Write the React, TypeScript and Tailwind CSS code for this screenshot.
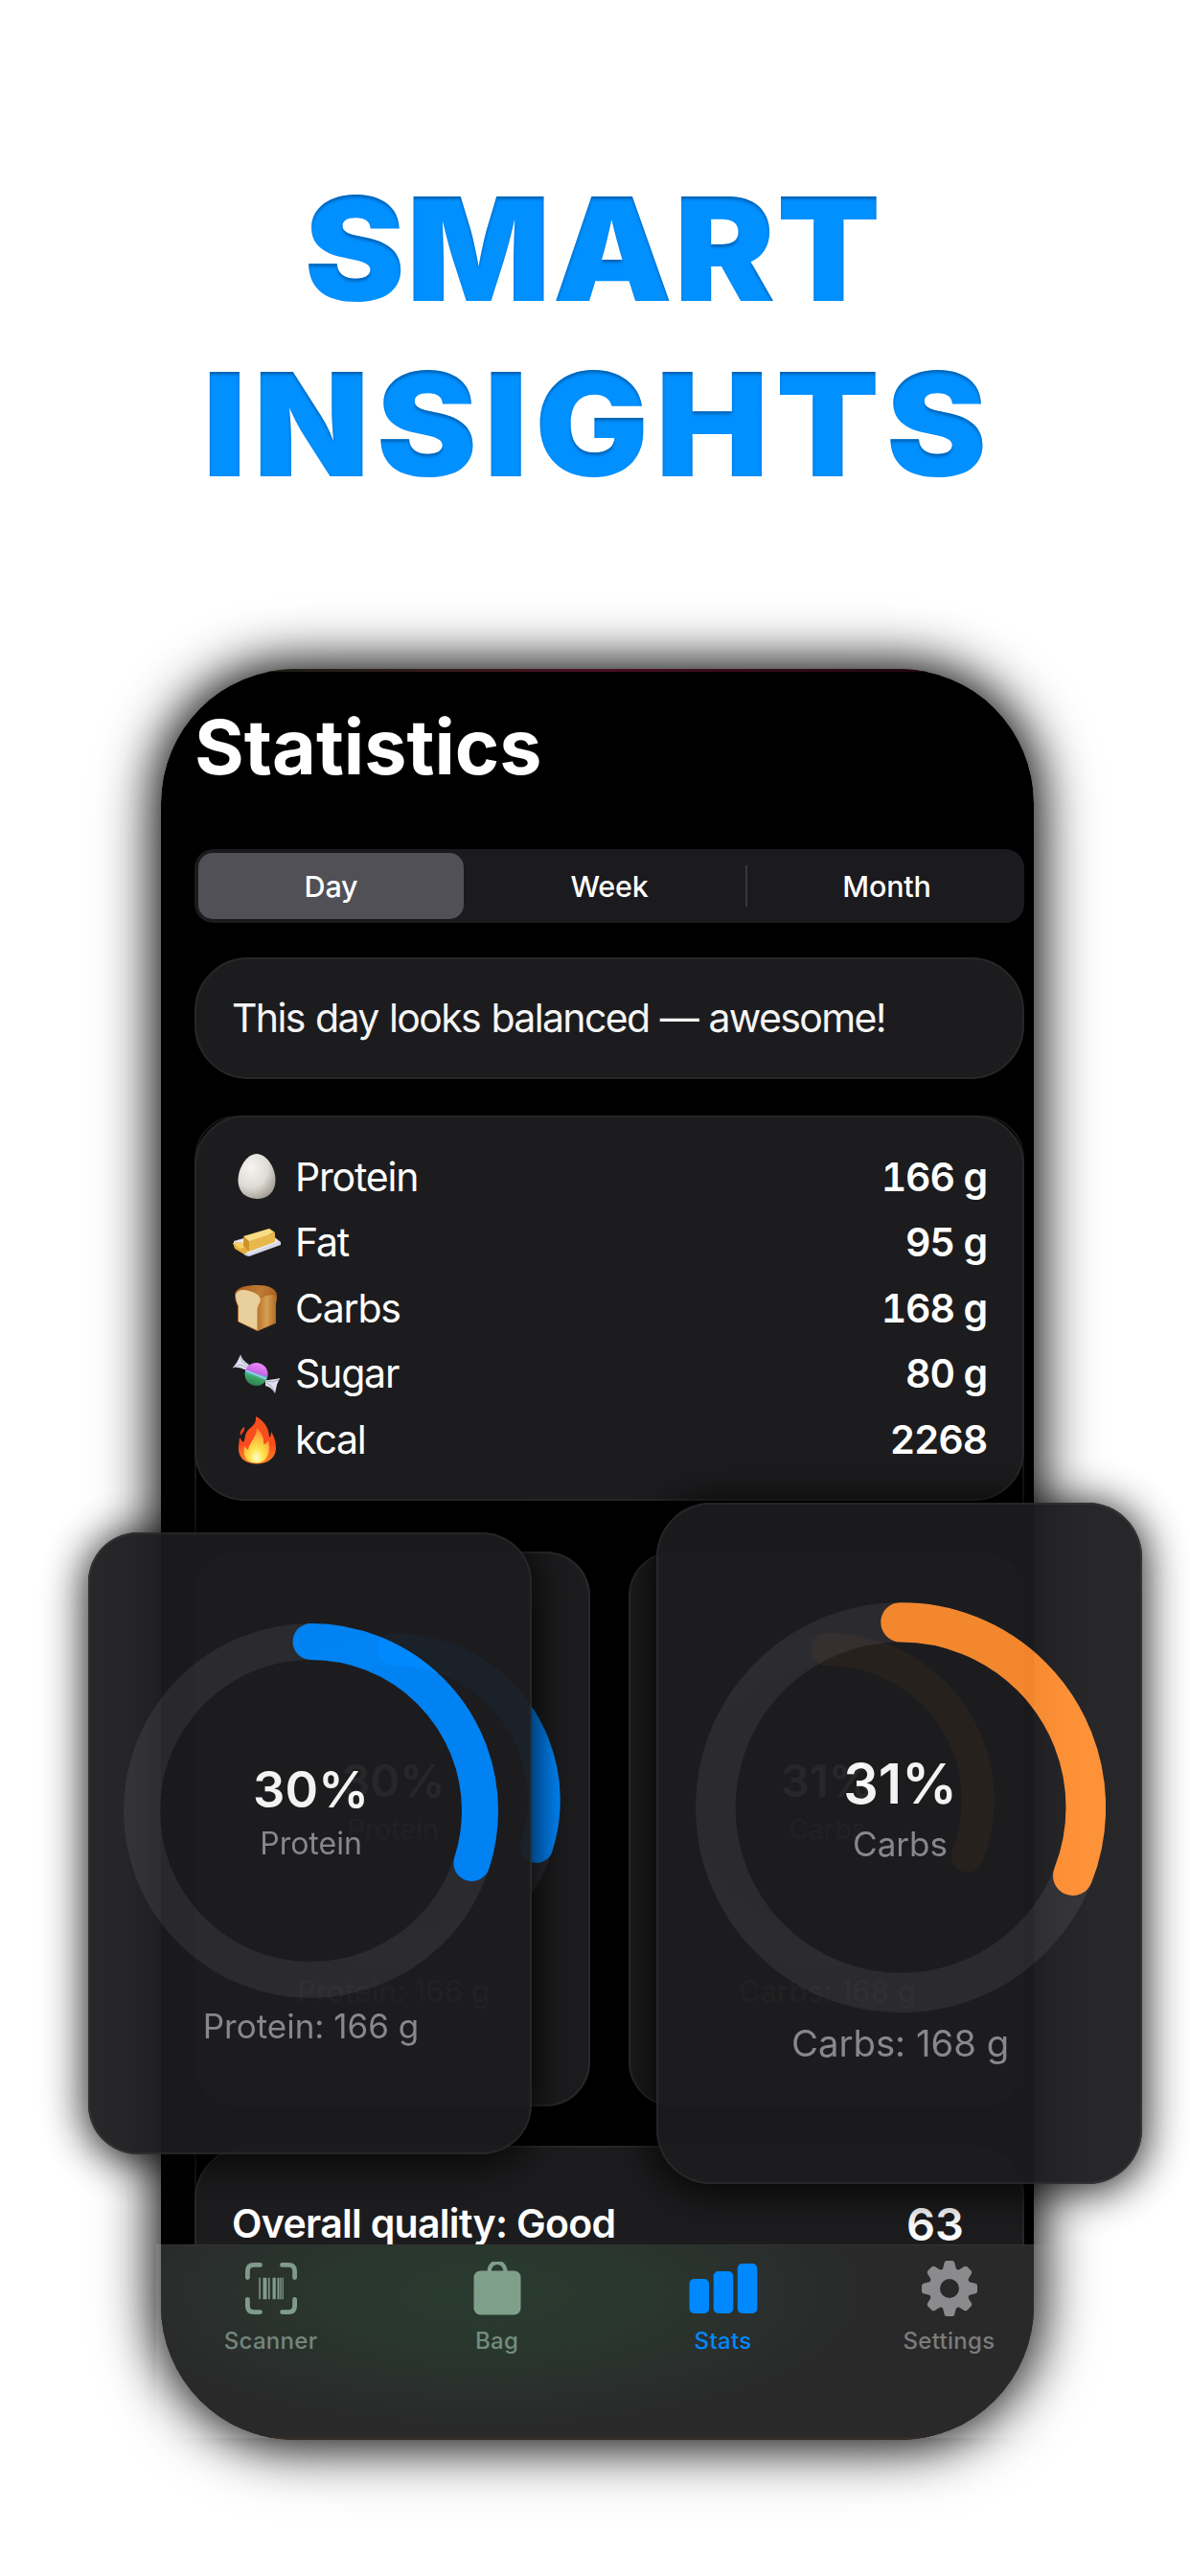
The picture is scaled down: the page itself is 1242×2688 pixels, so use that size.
import type { ReactNode } from 'react';
import clsx from 'clsx';

const FONT = "font-['Inter','Liberation_Sans',sans-serif]";

function EggIcon() {
  return (
    <svg viewBox="0 0 50 50" className="w-[50px] h-[50px]">
      <defs>
        <radialGradient id="egg" cx="0.35" cy="0.3" r="0.75">
          <stop offset="0" stopColor="#f6f4f1" />
          <stop offset="0.6" stopColor="#dedbd5" />
          <stop offset="1" stopColor="#a39e96" />
        </radialGradient>
      </defs>
      <path d="M25 1C35 1 44.500 15 44.500 28.500C44.500 41 36 48 25 48S5.500 41 5.500 28.500C5.500 15 15 1 25 1Z" fill="url(#egg)" />
    </svg>
  );
}

function ButterIcon() {
  return (
    <svg viewBox="0 0 50 50" className="w-[50px] h-[50px]">
      <path d="M1 23L36 13L50 24V27L17 39L13 38L1 26Z" fill="#d5d7e6" />
      <path d="M3 24L36 14L47 24L16 36Z" fill="#eceef6" />
      <path d="M0 25L9 24L17 33L12 37L2 31Z" fill="#e3ae3e" />
      <path d="M0 25L9 24L15 29L7 31Z" fill="#f5ce6a" />
      <path d="M11 18L38 10L44 14L17 23Z" fill="#f9dd83" />
      <path d="M11 18L17 23V34L11 28Z" fill="#cf9427" />
      <path d="M17 23L44 14V24L17 34Z" fill="#e8b84c" />
    </svg>
  );
}

function BreadIcon() {
  return (
    <svg viewBox="0 0 50 50" className="w-[50px] h-[50px]">
      <defs>
        <linearGradient id="crust" x1="0" y1="0" x2="1" y2="0.3">
          <stop offset="0" stopColor="#a9581d" />
          <stop offset="0.6" stopColor="#c07c36" />
          <stop offset="1" stopColor="#a45a1b" />
        </linearGradient>
        <linearGradient id="loaf" x1="0" y1="0" x2="1" y2="0">
          <stop offset="0" stopColor="#b9752c" />
          <stop offset="0.5" stopColor="#d59f52" />
          <stop offset="1" stopColor="#b06a24" />
        </linearGradient>
      </defs>
      <path d="M2 11C2 4 14 1 25 1S46 4 46 12C46 17 45 19 45 23V41L25.500 49L5 39V23C3 18 2 15 2 11Z" fill="url(#crust)" />
      <path d="M27 18C30 12 45 8 45.500 14C45.500 18 44.500 19 44.500 24V40L25.500 49Z" fill="url(#loaf)" />
      <path d="M3 12C3 6 11 5 17 7C24 9 30 12 28.500 18C27 22 25.500 23 25.500 27V48L6 39V23C4 19 3 16 3 12Z" fill="#e8cf9c" />
    </svg>
  );
}

function CandyIcon() {
  return (
    <svg viewBox="0 0 50 50" className="w-[50px] h-[50px]">
      <defs>
        <linearGradient id="candy" x1="0.65" y1="0" x2="0.35" y2="1">
          <stop offset="0" stopColor="#ee8cf6" />
          <stop offset="0.45" stopColor="#c665e4" />
          <stop offset="0.5" stopColor="#4cc7c2" />
          <stop offset="0.65" stopColor="#3fa568" />
          <stop offset="1" stopColor="#2b7d49" />
        </linearGradient>
      </defs>
      <path d="M8 5Q11 12 17 15L14 21Q8 17 0 18L4 13Z" fill="#dfe1ef" />
      <path d="M8 5L10 12L16 17M0 18L8 15L14 18" stroke="#a3a7bd" strokeWidth="1" fill="none" />
      <path d="M34 31Q40 31 49 29L46 36L44 45Q40 38 34 37Z" fill="#dfe1ef" />
      <path d="M35 32L42 33L49 30M35 34L40 37L44 44" stroke="#a3a7bd" strokeWidth="1" fill="none" />
      <circle cx="24.500" cy="25" r="12" fill="url(#candy)" />
      <path d="M13.500 21L35 30" stroke="#9ccbe8" strokeWidth="1.500" />
    </svg>
  );
}

function FireIcon() {
  return (
    <svg viewBox="0 0 50 50" className="w-[50px] h-[50px]">
      <defs>
        <linearGradient id="flame" x1="0" y1="0" x2="0" y2="1">
          <stop offset="0" stopColor="#f4511e" />
          <stop offset="0.6" stopColor="#fa4b1d" />
          <stop offset="1" stopColor="#f88a25" />
        </linearGradient>
        <radialGradient id="ember" cx="0.5" cy="0.85" r="0.8">
          <stop offset="0" stopColor="#fffbd0" />
          <stop offset="0.35" stopColor="#ffe34a" />
          <stop offset="1" stopColor="#fd8a33" />
        </radialGradient>
      </defs>
      <path d="M24 0C34 5 38 14 38 22C40 20 40 18 40 16C44 22 45 28 45 33C45 43 37 49.500 25 49.500S6 43 6 34C6 28 7 25 7 22C9 24 9 26 11 27C13 24 12 21 14 17C17 11 25 10 24 0Z" fill="url(#flame)" />
      <path d="M12 11C13 15 10 17 8 20C7 16 9 13 12 11Z" fill="#f0441c" />
      <path d="M25 12C30 17 33 23 32 29C34 29 36 27 37 25C40 36 36 48.500 25 48.500S10 42 12 31C13 33 15 34 16 35C17 27 25 22 25 12Z" fill="url(#ember)" />
    </svg>
  );
}

function ScannerIcon() {
  return (
    <svg viewBox="0 0 56 56" className="w-[56px] h-[56px]">
      <g fill="none" stroke="#819b8b" strokeWidth="4.800" strokeLinecap="round">
        <path d="M3.400 16.500V10Q3.400 3.400 10 3.400H16.500" />
        <path d="M39.500 3.400H46Q52.600 3.400 52.600 10V16.500" />
        <path d="M52.600 39.500V46Q52.600 52.600 46 52.600H39.500" />
        <path d="M16.500 52.600H10Q3.400 52.600 3.400 46V39.500" />
      </g>
      <path
        fill="#819b8b"
        d="M15.300 16.700h1.500v22.600h-1.500zM19.500 16.700h4v22.600h-4zM25 16.700h1.600v22.600H25zM29.500 16.700h3.300v22.600h-3.300zM34.500 16.700h2v22.600h-2zM37.300 16.700h1.400v22.600h-1.400zM39.600 16.700h1.200v22.600h-1.200z"
      />
    </svg>
  );
}

function BagIcon() {
  return (
    <svg viewBox="0 0 56 56" className="w-[56px] h-[56px]">
      <rect x="3.500" y="9.500" width="49" height="46" rx="7" fill="#809f8a" />
      <path d="M19.500 11C19.500 -2.500 36.500 -2.500 36.500 11" fill="none" stroke="#809f8a" strokeWidth="4.200" />
    </svg>
  );
}

function StatsIcon() {
  return (
    <svg viewBox="0 0 72 56" className="w-[72px] h-[56px]">
      <g fill="#0088ff">
        <rect x="0.500" y="18" width="20.500" height="36" rx="5" />
        <rect x="25.700" y="10" width="20.500" height="44" rx="5" />
        <rect x="50.800" y="2" width="20.500" height="52" rx="5" />
      </g>
    </svg>
  );
}

function GearIcon() {
  return (
    <svg viewBox="-30 -30 60 60" className="w-[60px] h-[60px]">
      <defs>
        <mask id="gear-hole">
          <rect x="-30" y="-30" width="60" height="60" fill="#fff" />
          <circle r="10" fill="#000" />
        </mask>
      </defs>
      <g fill="#8b8b8e" mask="url(#gear-hole)">
        <circle r="21.500" />
        {[0, 45, 90, 135, 180, 225, 270, 315].map((deg) => (
          <path key={deg} transform={`rotate(${deg})`} d="M-8 -19Q-6.500 -21 -6 -24L-5.500 -26.500Q-5 -29 -3 -29H3Q5 -29 5.500 -26.500L6 -24Q6.500 -21 8 -19Z" />
        ))}
      </g>
    </svg>
  );
}

const nutrients = [
  { label: 'Protein', value: '166 g', icon: <EggIcon /> },
  { label: 'Fat', value: '95 g', icon: <ButterIcon /> },
  { label: 'Carbs', value: '168 g', icon: <BreadIcon /> },
  { label: 'Sugar', value: '80 g', icon: <CandyIcon /> },
  { label: 'kcal', value: '2268', icon: <FireIcon /> },
];

const tabs = [
  { label: 'Scanner', icon: <ScannerIcon />, color: 'text-[#72877b]' },
  { label: 'Bag', icon: <BagIcon />, color: 'text-[#718c7c]' },
  { label: 'Stats', icon: <StatsIcon />, color: 'text-[#0088ff]' },
  { label: 'Settings', icon: <GearIcon />, color: 'text-[#7b7b7e]' },
];

type MacroCardProps = {
  name: string;
  percent: number;
  grams: string;
  color: string;
  floating?: boolean;
  className?: string;
};

// Everything inside is sized in em, so the card grows with its own font size.
function MacroCard({ name, percent, grams, color, floating, className }: MacroCardProps) {
  return (
    <div
      className={clsx(
        'w-[46.3em] h-[64.9em] shrink-0 rounded-[5.200em] bg-[#1c1c1e] flex flex-col items-center pt-[9.500em] pl-[0.200em]',
        floating
          ? 'opacity-95 shadow-[inset_0_0_0_2px_#28282a,0_4px_44px_4px_rgba(0,0,0,0.9)]'
          : 'shadow-[inset_0_0_0_2px_#28282a]',
        className,
      )}
    >
      <div className="relative w-[39.1em] h-[39.1em]">
        <svg viewBox="0 0 391 391" className="w-full h-full -rotate-90">
          <circle cx="195.500" cy="195.500" r="176.500" fill="none" stroke="#2c2b30" strokeWidth="38" />
          <circle
            cx="195.500"
            cy="195.500"
            r="176.500"
            fill="none"
            stroke={color}
            strokeWidth="38"
            strokeLinecap="round"
            pathLength="100"
            strokeDasharray={`${percent} 100`}
          />
        </svg>
        <div className="absolute inset-0 flex flex-col items-center justify-center gap-[1.500em] pt-[0.200em]">
          <div className="text-[5.250em] leading-none font-semibold text-white">{percent}%</div>
          <div className="text-[3.200em] leading-none text-[#8e8d93]">{name}</div>
        </div>
      </div>
      <div className="mt-[1.200em]">
        <div className="text-[3.500em] leading-none text-[#8e8d93]">
          {name}: {grams}
        </div>
      </div>
    </div>
  );
}

function Panel({ className, children }: { className?: string; children: ReactNode }) {
  return <div className={clsx('bg-[#1c1c1e] border-2 border-[#272728]', className)}>{children}</div>;
}

function Headline() {
  return (
    <h1 className="pt-[168px] h-[698px] flex flex-col items-center font-black text-[150px] leading-[183px] text-[#0090ff] [filter:url(#inner-shadow)]">
      <span className="tracking-[1.700px] -ml-[4px] scale-x-105">SMART</span>
      <span className="tracking-[6.900px] pl-[6px] scale-x-105">INSIGHTS</span>
      <svg width="0" height="0" className="absolute">
        <filter id="inner-shadow">
          <feOffset in="SourceAlpha" dy="3" result="off" />
          <feGaussianBlur in="off" stdDeviation="1.500" result="blur" />
          <feComposite in="SourceAlpha" in2="blur" operator="out" result="edge" />
          <feFlood floodColor="#002a55" floodOpacity="0.600" />
          <feComposite in2="edge" operator="in" result="shade" />
          <feMerge>
            <feMergeNode in="SourceGraphic" />
            <feMergeNode in="shade" />
          </feMerge>
        </filter>
      </svg>
    </h1>
  );
}

export default function App() {
  return (
    <div className={clsx('relative w-[1242px] h-[2688px] overflow-hidden bg-white', FONT)}>
      <Headline />

      {/* Phone */}
      <div className="ml-[167.500px] w-[911px] h-[1848px] rounded-[140px] shadow-[0_0_50px_6px_rgba(0,0,0,0.9),0_6px_80px_0_rgba(0,0,0,0.3)]">
        <div className="relative w-full h-full rounded-[140px] overflow-hidden bg-black flex flex-col">
          <div className="h-[3px] mx-[110px] bg-linear-to-r from-[#1a1f14] via-[#4a0f22] to-[#200810]" />
          <div className="flex-1 pl-[35.500px] pr-[9.500px] pt-[38px] overflow-hidden">
            <h2 className="h-[80px] text-[79px] leading-[80px] font-bold text-white">Statistics</h2>

            {/* Range picker */}
            <div className="mt-[67px] h-[77px] rounded-[20px] bg-[#1b1a1e] p-[4px] flex items-center text-[30.500px] font-medium tracking-[-0.200px] text-white">
              <div className="w-[277px] h-[69px] rounded-[15px] bg-[#515056] flex items-center justify-center">Day</div>
              <div className="w-[296px] h-[43px] border-r-2 border-[#38373b] flex items-center justify-center pl-[10px]">Week</div>
              <div className="flex-1 flex items-center justify-center pl-[6px]">Month</div>
            </div>

            <Panel className="mt-[36px] h-[127px] rounded-[56px] pl-[37px] flex items-center">
              <p className="text-[41px] tracking-[-1.650px] [word-spacing:1.500px] text-[#f5f5f5] whitespace-nowrap">
                This day looks balanced — awesome!
              </p>
            </Panel>

            <div className="relative mt-[38px] h-[1300px]">
              {/* outline of the group that the cards sit in */}
              <div className="absolute inset-0 rounded-[44px] border-2 border-[#161616]" />

              <Panel className="relative h-[402px] rounded-[52px] pl-[38px] pr-[37px] pt-[28px]">
                {nutrients.map((n) => (
                  <div key={n.label} className="h-[68.600px] flex items-center text-[41px] text-white">
                    {n.icon}
                    <span className="ml-[15px] tracking-[-1.200px]">{n.label}</span>
                    <span className="ml-auto font-semibold tabular-nums tracking-[-1.200px]">{n.value}</span>
                  </div>
                ))}
              </Panel>

              <div className="relative mt-[53px] flex justify-between">
                <MacroCard className="text-[8.920px]" name="Protein" percent={30} grams="166 g" color="#0088ff" />
                <MacroCard className="text-[8.920px]" name="Carbs" percent={31} grams="168 g" color="#ff8d2f" />
              </div>

              <Panel className="relative mt-[41px] h-[240px] rounded-[56px] pl-[37px] pr-[61px] pt-[50px]">
                <div className="flex items-center justify-between h-[60px] text-white font-semibold">
                  <span className="text-[41px] tracking-[-0.700px]">Overall quality: Good</span>
                  <span className="text-[47px]">63</span>
                </div>
              </Panel>
            </div>
          </div>
        </div>
      </div>

      {/* Cards lifted out of the phone */}
      <MacroCard
        floating
        className="absolute left-[92px] top-[1599px] text-[10px]"
        name="Protein"
        percent={30}
        grams="166 g"
        color="#0088ff"
      />
      <MacroCard
        floating
        className="absolute left-[685px] top-[1568px] text-[10.950px]"
        name="Carbs"
        percent={31}
        grams="168 g"
        color="#ff8d2f"
      />

      {/* Tab bar, with its glass spilling a little over the phone's shadow */}
      <div className="absolute left-[163px] top-[2342px] w-[945px] h-[202px] bg-linear-to-r from-white/10 from-95% to-transparent" />
      <div className="absolute left-[167.500px] top-[2342px] w-[911px] h-[204px] overflow-hidden rounded-b-[140px] border-t border-[#333] bg-[#29292a]">
        <div className="absolute inset-0 bg-[radial-gradient(ellipse_400px_140px_at_340px_50px,#293a2f_0%,#29382e_35%,#2a302d_70%,#29292a_100%)]" />
        <div className="absolute inset-x-0 bottom-0 h-[3px] bg-[#372c25]" />
        <div className="relative -ml-[3px] w-[944px] flex">
          {tabs.map((t) => (
            <div key={t.label} className="w-[236px] flex flex-col items-center pt-[15px]">
              <div className="h-[60px] flex items-center">{t.icon}</div>
              <span className={clsx('mt-[9px] text-[24px] leading-[32px] font-medium tracking-[0.300px]', t.color)}>{t.label}</span>
            </div>
          ))}
        </div>
      </div>
    </div>
  );
}
